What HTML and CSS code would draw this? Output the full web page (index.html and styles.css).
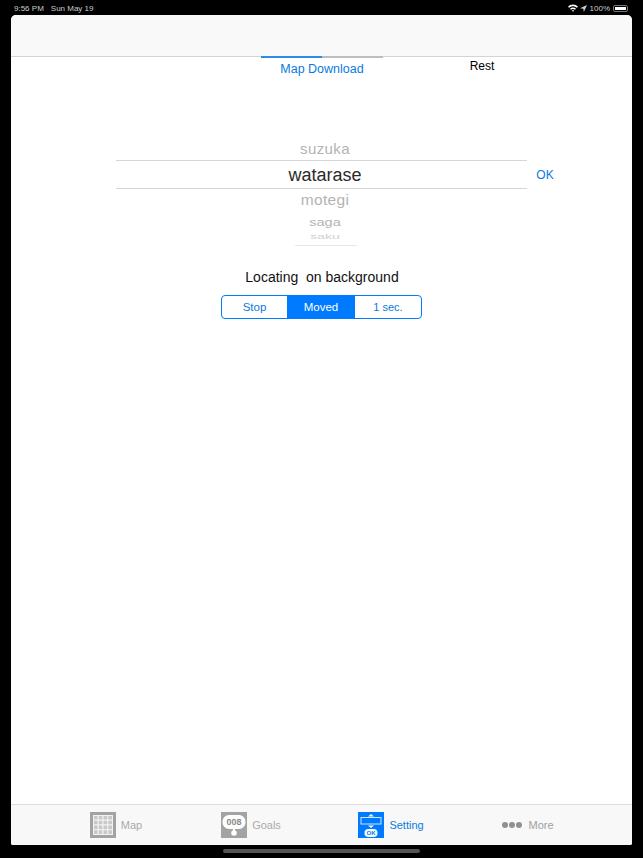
FILE: index.html
```html
<!DOCTYPE html>
<html lang="en">
<head>
    <meta charset="UTF-8" />
    <title>Setting</title>
    <link rel="stylesheet" href="styles.css">
</head>
<body>
    <div class="status-bar">
        <div class="status-left">
            <span>9:56 PM</span>
            <span>Sun May 19</span>
        </div>
        <div class="status-right">
            <svg class="wifi" width="10" height="8" viewBox="0 0 11 8">
                <path d="M0 2.6C3 -.6 8 -.6 11 2.6L9.8 3.8C7.4 1.4 3.6 1.4 1.2 3.8Z" fill="#fff"/>
                <path d="M2.2 4.8C4 3 7 3 8.8 4.8L7.7 5.9C6.4 4.7 4.6 4.7 3.3 5.9Z" fill="#fff"/>
                <path d="M4.2 6.9C5 6.2 6 6.2 6.8 6.9L5.5 8.2Z" fill="#fff"/>
            </svg>
            <svg class="arrow" width="7" height="7" viewBox="0 0 8 8">
                <path d="M8 0L0 3.6L3.8 4.2L4.4 8Z" fill="#ccc"/>
            </svg>
            <span>100%</span>
            <div class="battery"><div class="battery-fill"></div></div>
        </div>
    </div>

    <div class="app">
        <div class="nav-bar"></div>

        <div class="main">
            <div class="tabs">
                <div class="tab tab-active">
                    <div class="tab-line"></div>
                    <span>Map Download</span>
                </div>
                <div class="tab tab-rest">Rest</div>
            </div>

            <div class="picker-row">
                <div class="picker">
                    <div class="pick pick-1">suzuka</div>
                    <div class="pick pick-sel">watarase</div>
                    <div class="pick pick-2">motegi</div>
                    <div class="pick pick-3">saga</div>
                    <div class="pick pick-4">saku</div>
                    <div class="pick-edge"></div>
                </div>
                <div class="ok">OK</div>
            </div>

            <div class="locating">Locating&nbsp; on background</div>

            <div class="segments">
                <div class="segment">Stop</div>
                <div class="segment segment-on">Moved</div>
                <div class="segment segment-last">1 sec.</div>
            </div>
        </div>

        <div class="tab-bar">
            <div class="bar-item">
                <svg width="26" height="26" viewBox="0 0 26 26">
                    <rect width="26" height="26" fill="#a3a3a3"/>
                    <g fill="#c9c9c9" stroke="#f2f2f2" stroke-width="1">
                        <rect x="3.5" y="3.5" width="4.75" height="4.75"/>
                        <rect x="8.25" y="3.5" width="4.75" height="4.75"/>
                        <rect x="13" y="3.5" width="4.75" height="4.75"/>
                        <rect x="17.75" y="3.5" width="4.75" height="4.75"/>
                        <rect x="3.5" y="8.25" width="4.75" height="4.75"/>
                        <rect x="8.25" y="8.25" width="4.75" height="4.75"/>
                        <rect x="13" y="8.25" width="4.75" height="4.75"/>
                        <rect x="17.75" y="8.25" width="4.75" height="4.75"/>
                        <rect x="3.5" y="13" width="4.75" height="4.75"/>
                        <rect x="8.25" y="13" width="4.75" height="4.75"/>
                        <rect x="13" y="13" width="4.75" height="4.75"/>
                        <rect x="17.75" y="13" width="4.75" height="4.75"/>
                        <rect x="3.5" y="17.75" width="4.75" height="4.75"/>
                        <rect x="8.25" y="17.75" width="4.75" height="4.75"/>
                        <rect x="13" y="17.75" width="4.75" height="4.75"/>
                        <rect x="17.75" y="17.75" width="4.75" height="4.75"/>
                    </g>
                </svg>
                <span>Map</span>
            </div>
            <div class="bar-item">
                <svg width="26" height="26" viewBox="0 0 26 26">
                    <rect width="26" height="26" fill="#a3a3a3"/>
                    <rect x="1.5" y="3" width="23" height="14" rx="6.5" fill="#fff"/>
                    <rect x="12" y="16" width="2" height="3" fill="#fff"/>
                    <circle cx="13" cy="21" r="2.8" fill="#fff"/>
                    <text x="13" y="13.4" class="goal-num">008</text>
                </svg>
                <span>Goals</span>
            </div>
            <div class="bar-item bar-item-on">
                <svg width="26" height="26" viewBox="0 0 26 26">
                    <rect width="26" height="26" fill="#007aff"/>
                    <rect x="3" y="5.5" width="20" height="6.5" fill="none" stroke="#cfe4ff" stroke-width="1"/>
                    <path d="M13 2L16 4.5H10Z" fill="#fff"/>
                    <path d="M13 16L10 13.5H16Z" fill="#fff"/>
                    <rect x="6.5" y="17" width="13" height="8" rx="4" fill="#fff"/>
                    <text x="13" y="23" class="set-ok">OK</text>
                </svg>
                <span>Setting</span>
            </div>
            <div class="bar-item bar-more">
                <div class="dots">
                    <i></i><i></i><i></i>
                </div>
                <span>More</span>
            </div>
        </div>
    </div>

    <div class="home-row">
        <div class="home-bar"></div>
    </div>
</body>
</html>
```

FILE: styles.css
```css
* {
    box-sizing: border-box;
}
html, body {
    height: 100%;
}
body {
    margin: 0;
    background-color: #000;
    font-family: "Liberation Sans", Arial, sans-serif;
    display: flex;
    flex-direction: column;
    overflow: hidden;
}

.status-bar {
    height: 15px;
    padding: 1px 15px 0 14px;
    display: flex;
    justify-content: space-between;
    align-items: center;
    color: #ccc;
    font-size: 8px;
}
.status-left {
    display: flex;
    gap: 7px;
}
.status-right {
    display: flex;
    align-items: center;
    gap: 3px;
}
.wifi {
    margin-right: -1px;
}
.battery {
    width: 15px;
    height: 7px;
    padding: 1px;
    border: 1px solid #777;
    border-radius: 2px;
}
.battery-fill {
    height: 100%;
    background-color: #fff;
}

.app {
    height: 830px;
    margin: 0 11px;
    display: flex;
    flex-direction: column;
    background-color: #fff;
    border-radius: 5px 5px 2px 2px;
    overflow: hidden;
}
.nav-bar {
    height: 42px;
    flex-shrink: 0;
    background-color: #f9f9f9;
    border-bottom: 1px solid #d4d4d4;
}

.main {
    flex: 1;
}

.tabs {
    display: flex;
    padding-left: 250px;
    height: 78px;
}
.tab-active {
    width: 122px;
    margin-top: -1px;
    text-align: center;
    font-size: 12.5px;
    color: #0a7ae0;
}
.tab-line {
    height: 2px;
    margin-bottom: 4px;
    background: linear-gradient(to right, #2f8be6 50%, #bdbdbd 50%);
}
.tab-active span {
    display: block;
    line-height: 15px;
}
.tab-rest {
    width: 122px;
    margin-left: 38px;
    padding-top: 2px;
    text-align: center;
    font-size: 12px;
    line-height: 15px;
    color: #000;
}

.picker-row {
    display: flex;
    padding-left: 105px;
}
.picker {
    width: 411px;
}
.pick {
    padding-left: 7px;
    color: #b3b3b3;
    text-align: center;
}
.pick-1 {
    height: 25px;
    line-height: 27px;
    font-size: 15px;
    letter-spacing: .4px;
}
.pick-sel {
    height: 29px;
    line-height: 28px;
    font-size: 18px;
    color: #2b2b2b;
    border-top: 1px solid #d6d6d6;
    border-bottom: 1px solid #d6d6d6;
}
.pick-2 {
    height: 24px;
    line-height: 22px;
    font-size: 15.5px;
    letter-spacing: .3px;
}
.pick-3 {
    height: 19px;
    line-height: 19px;
    font-size: 14.5px;
    transform: scaleY(.75);
}
.pick-4 {
    height: 10px;
    line-height: 10px;
    font-size: 14px;
    color: #d0d0d0;
    transform: scaleY(.45);
}
.pick-edge {
    width: 62px;
    height: 1px;
    margin: 3px 0 0 179px;
    background-color: #e8e8e8;
}
.ok {
    width: 36px;
    margin-top: 25px;
    text-align: center;
    font-size: 12px;
    line-height: 30px;
    color: #0a7ae0;
}

.locating {
    margin-top: 22px;
    padding-left: 1px;
    text-align: center;
    font-size: 14px;
    line-height: 18px;
    color: #111;
}

.segments {
    width: 201px;
    height: 24px;
    margin: 9px 0 0 210px;
    display: flex;
    border: 1px solid #007aff;
    border-radius: 4px;
    overflow: hidden;
}
.segment {
    flex: 1;
    text-align: center;
    font-size: 11.5px;
    line-height: 22px;
    color: #0a7ae0;
}
.segment-on {
    flex: 0 0 68px;
    background-color: #007aff;
    color: #fff;
}
.segment:first-child {
    flex: 0 0 65px;
}
.segment-last {
    font-size: 11px;
}

.tab-bar {
    height: 41px;
    flex-shrink: 0;
    display: grid;
    grid-template-columns: 134px 136px 144px 130px;
    padding-left: 38px;
    background-color: #f8f8f8;
    border-top: 1px solid #ddd;
}
.bar-item {
    display: flex;
    justify-content: center;
    align-items: center;
    gap: 5px;
    font-size: 11px;
    color: #aaa;
}
.bar-item-on {
    color: #0a7ae0;
}
.bar-more {
    gap: 6px;
    color: #a0a0a0;
}
.dots {
    display: flex;
    gap: 1px;
}
.dots i {
    width: 6px;
    height: 6px;
    border-radius: 50%;
    background-color: #909090;
}
.goal-num {
    font-family: "Liberation Sans", Arial, sans-serif;
    font-size: 9px;
    font-weight: bold;
    fill: #8a8a8a;
    text-anchor: middle;
}
.set-ok {
    font-family: "Liberation Sans", Arial, sans-serif;
    font-size: 6px;
    font-weight: bold;
    fill: #007aff;
    text-anchor: middle;
}

.home-row {
    flex: 1;
    display: flex;
    justify-content: center;
    padding-top: 4px;
}
.home-bar {
    width: 197px;
    height: 4px;
    border-radius: 2px;
    background-color: #555;
}
```
